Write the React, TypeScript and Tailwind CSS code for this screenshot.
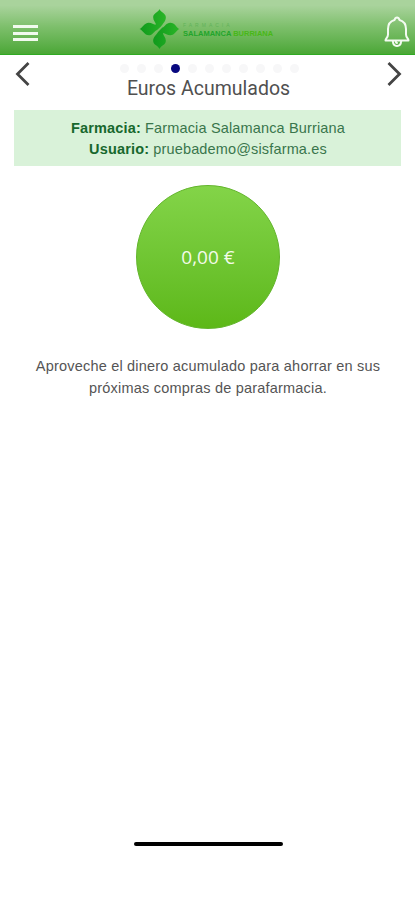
const pages = Array.from({ length: 11 }, (_, i) => i);
const activePage = 3;

const MenuButton = () => (
  <button aria-label="Menú" className="flex w-[25px] flex-col gap-[3.5px]">
    <span className="h-[3px] w-full bg-[#f1faee]" />
    <span className="h-[3px] w-full bg-[#f1faee]" />
    <span className="h-[3px] w-full bg-[#f1faee]" />
  </button>
);

const Logo = () => (
  <div className="flex items-center gap-[3px]">
    <svg width="41" height="42" viewBox="0 0 42 42" className="shrink-0">
      <defs>
        <linearGradient id="leaf" x1="0" y1="0" x2="1" y2="0">
          <stop offset="0" stopColor="#0f9a1c" />
          <stop offset="1" stopColor="#2ab527" />
        </linearGradient>
      </defs>
      <g fill="url(#leaf)">
        <path d="M21 0.500C22 4 27.500 4.500 27.500 9C27.500 13 24.500 15.500 22.500 18.500L18.500 22C15.500 23 14 27.500 10 27.500C5.500 27.500 4 22 0.500 21C4 19.500 5 15 10 14.500C13 14.500 15 16.500 17.500 16.500C17 14 14.500 12.500 14.500 9C14.500 4.500 20 4 21 0.500Z" />
        <path d="M21 41.500C20 38 14.500 37.500 14.500 33C14.500 29 18 27 19.500 24L24 19.500C26.500 18.500 28 14.500 32 14.500C37 14.500 38 19.500 41.500 21C38 22 37 27.500 32 27.500C29 27.500 27 25 24.500 25C25 28 27.500 29.500 27.500 33C27.500 37.500 22 38 21 41.500Z" />
      </g>
    </svg>
    <div className="mt-px flex flex-col whitespace-nowrap">
      <span className="h-[8px] text-[5px] leading-[8px] tracking-[3px] text-[#62b259]">
        FARMACIA
      </span>
      <span className="text-[7.5px] leading-[9px] font-bold text-[#22a52b]">
        SALAMANCA <span className="text-[#48b817]">BURRIANA</span>
      </span>
    </div>
  </div>
);

const BellIcon = () => (
  <svg
    width="26"
    height="32"
    viewBox="0 0 26 32"
    fill="none"
    stroke="#f4fbf2"
    strokeWidth="2"
    strokeLinejoin="round"
    strokeLinecap="round"
  >
    <path d="M1.500 24.500C1.500 22.500 4 21.500 4 18.500V13C4 8 7 5 10.500 4C11 2.300 12 1.500 13 1.500S15 2.300 15.500 4C19 5 22 8 22 13V18.500C22 21.500 24.500 22.500 24.500 24.500Z" />
    <path d="M8.800 25C9 28 10.500 30 13 30S17 28 17.200 25" />
    <path d="M11.800 25C11.800 26.500 12.300 27 13 27" />
  </svg>
);

const Arrow = ({ direction }: { direction: "left" | "right" }) => (
  <button aria-label={direction === "left" ? "Anterior" : "Siguiente"}>
    <svg
      width="16"
      height="26"
      viewBox="0 0 16 26"
      fill="none"
      stroke="#444"
      strokeWidth="2.8"
      className={direction === "right" ? "rotate-180" : ""}
    >
      <path d="M14.500 2L3.500 13L14.500 24" />
    </svg>
  </button>
);

const Header = () => (
  <header className="flex h-[55px] items-start border-b border-[#2faa22] bg-linear-to-b from-[#a9d39c] from-10% via-[#7dbf6b] via-50% to-[#4aa735] pr-[5px] pl-[13px]">
    <div className="pt-[25px]">
      <MenuButton />
    </div>
    <div className="ml-[101px] pt-2">
      <Logo />
    </div>
    <div className="ml-auto pt-4">
      <BellIcon />
    </div>
  </header>
);

const Pager = () => (
  <div className="flex h-[50px] items-start justify-between pt-[6px] pr-3 pl-[14px]">
    <Arrow direction="left" />
    <div className="flex flex-col items-center pt-[3px]">
      <div className="flex gap-2 pl-px">
        {pages.map((page) => (
          <span
            key={page}
            className={`size-[9px] rounded-full ${
              page === activePage ? "bg-[#08087f]" : "bg-[#f7f7f8]"
            }`}
          />
        ))}
      </div>
      <h1 className="mt-1 font-[Roboto,sans-serif] text-[19.5px] leading-6 text-[#505050]">
        Euros Acumulados
      </h1>
    </div>
    <Arrow direction="right" />
  </div>
);

export default function App() {
  return (
    <div className="flex h-[900px] w-[415px] flex-col bg-white font-['Liberation_Sans',Arial,sans-serif]">
      <Header />
      <Pager />
      <div className="mx-[14px] mt-[5px] flex h-[56px] flex-col items-center justify-center bg-[#d9f2d9] pt-px pl-px text-[14.5px] leading-[21px] tracking-[0.15px] text-[#39764c]">
        <p>
          <b className="text-[#17682d]">Farmacia:</b> Farmacia Salamanca Burriana
        </p>
        <p>
          <b className="text-[#17682d]">Usuario:</b> pruebademo@sisfarma.es
        </p>
      </div>
      <div className="mt-[19px] ml-[136px] flex size-[144px] items-center justify-center rounded-full border border-[#62b52b] bg-linear-to-b from-[#83d448] to-[#5db817] font-['Open_Sans',sans-serif] text-[19px] text-[#f3fbe9]">
        0,00 €
      </div>
      <p className="mt-[27px] pl-px text-center text-[14.5px] leading-[21.500px] tracking-[0.2px] text-[#555]">
        Aproveche el dinero acumulado para ahorrar en sus
        <br />
        próximas compras de parafarmacia.
      </p>
      <div className="mt-auto mb-[54px] ml-[134px] h-1 w-[149px] rounded-full bg-black" />
    </div>
  );
}
